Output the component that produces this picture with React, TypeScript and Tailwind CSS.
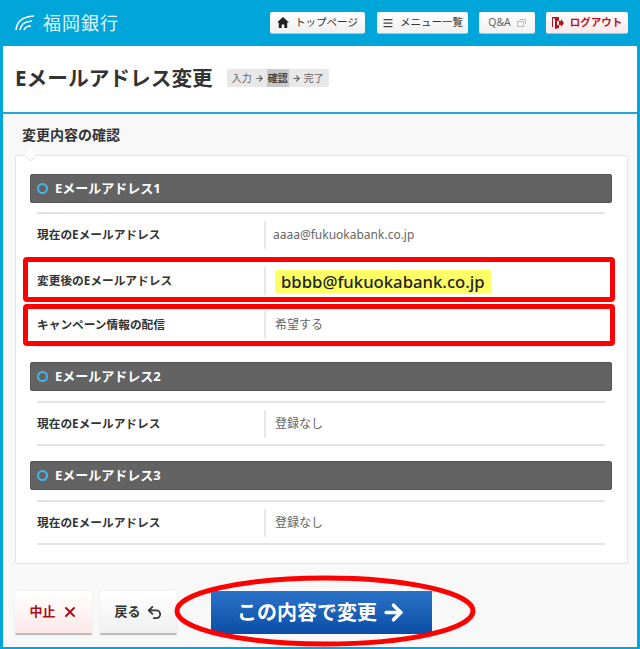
import { ArrowRight, Menu, Undo2, X } from "lucide-react";

const font = { fontFamily: '"Noto Sans", "Noto Sans CJK JP", sans-serif' };

function SectionHeader({ title }: { title: string }) {
  return (
    <div className="flex h-[29px] items-center gap-[7px] rounded-[2px] border border-[#555] bg-[#636363] pl-[6px] text-[13px] font-bold text-white">
      <span className="h-[11px] w-[11px] rounded-full border-2 border-[#45b4e6]" />
      {title}
    </div>
  );
}

function Row({ label, value }: { label: string; value: string }) {
  return (
    <div className="flex h-[43px] items-center border-b-2 border-[#e4e4e4]">
      <div className="w-[227px] text-[11.7px] font-bold text-[#333]">{label}</div>
      <div className="flex h-[28px] items-center border-l-2 border-[#e8e8e8] pl-[9px] text-[12px] text-[#666]">
        {value}
      </div>
    </div>
  );
}

function HeaderButton({ children, className }: { children: React.ReactNode; className: string }) {
  return (
    <div className={`flex h-[22px] items-center justify-center gap-[6px] rounded-[2px] border-b border-[#bbb] text-[10.5px] ${className}`}>
      {children}
    </div>
  );
}

export default function App() {
  return (
    <div className="relative h-[649px] w-[640px] overflow-hidden bg-[#00a5d9] px-[3px] pb-[3px]" style={font}>
      {/* Header */}
      <div className="flex h-[46px] items-center">
        <div className="ml-[12px] flex items-center gap-[8px] text-[18px] leading-none tracking-[1px] text-[#e3f5fc]">
          <svg width="20" height="16" viewBox="0 0 20 16" fill="none" stroke="#fff" strokeWidth="1.6">
            <path d="M1 15C2 7 6 2 19 1" />
            <path d="M5 15C6 10 8 7 17 6" />
            <path d="M9 15C10 12 12 11 16 11" />
          </svg>
          福岡銀行
        </div>
        <div className="ml-[151px] flex items-center">
          <HeaderButton className="w-[95px] bg-gradient-to-b from-white to-[#f0f0f0] text-[#333]">
            <svg width="12" height="11" viewBox="0 0 12 11" fill="#222">
              <path d="M6 0L12 5.5H10.2V11H7.3V7.5H4.7V11H1.8V5.5H0Z" />
            </svg>
            トップページ
          </HeaderButton>
          <HeaderButton className="ml-[12px] w-[91px] bg-gradient-to-b from-white to-[#f0f0f0] text-[#333]">
            <Menu size={12} stroke="#444" strokeWidth={2.5} />
            メニュー一覧
          </HeaderButton>
          <HeaderButton className="ml-[11px] w-[56px] bg-gradient-to-b from-white to-[#f0f0f0] text-[#666]">
            Q&amp;A
            <svg width="9" height="8" viewBox="0 0 9 8" fill="none" stroke="#bbb">
              <rect x="0.5" y="2.5" width="6" height="5" />
              <path d="M2.5 0.5H8.5V5" />
            </svg>
          </HeaderButton>
          <HeaderButton className="ml-[11px] w-[82px] gap-[4px] bg-gradient-to-b from-white to-[#fde8e8] font-bold text-[#b5121b]">
            <svg width="12" height="12" viewBox="0 0 12 12" fill="#b5121b">
              <path d="M0 0H7V4H5V8H7V11L3 12V2L1 1V10H0Z" />
              <path d="M7 4H9V2L12 6L9 10V8H7Z" />
            </svg>
            ログアウト
          </HeaderButton>
        </div>
      </div>

      {/* Title */}
      <div className="flex h-[68px] items-center gap-[14px] border-b-2 border-[#22a5d8] bg-white pb-[2px] pl-[12px]">
        <h1 className="text-[20.7px] font-bold leading-none text-[#333]">Eメールアドレス変更</h1>
        <div className="flex h-[18px] items-center rounded-[2px] bg-[#e8e8e8] pl-[5px] text-[10px] text-[#666]">
          入力
          <ArrowRight size={9} className="mx-[3px]" strokeWidth={3} />
          <span className="flex h-[18px] items-center bg-[#c8c8c8] px-[1px] font-bold text-[#444]">確認</span>
          <ArrowRight size={9} className="mx-[3px]" strokeWidth={3} />
          <span className="pr-[5px]">完了</span>
        </div>
      </div>

      {/* Content */}
      <div className="h-[533px] bg-[#f8f8f8] pl-[12px] pr-[9px]">
        <h2 className="pl-[7px] pt-[11px] text-[14px] font-bold leading-[20px] text-[#333]">変更内容の確認</h2>
        <div className="relative mt-[10px] h-[409px] rounded-[2px] border border-[#e2e2e2] bg-white pl-[14px] pr-[15px] pt-[18px]">
          <div className="absolute -top-[5px] left-[10px] h-[9px] w-[9px] rotate-45 border-b border-r border-[#e2e2e2] bg-white" />
          <SectionHeader title="Eメールアドレス1" />
          <div className="ml-[7px] mr-[7px] mt-[9px] border-t-2 border-[#e4e4e4]">
            <div className="flex h-[42px] items-center">
              <div className="w-[227px] text-[11.7px] font-bold text-[#333]">現在のEメールアドレス</div>
              <div className="flex h-[28px] items-center border-l-2 border-[#e8e8e8] pl-[7px] text-[12px] text-[#666]">aaaa@fukuokabank.co.jp</div>
            </div>
            <div className="mt-[4px] flex h-[42px] items-center">
              <div className="w-[227px] text-[11.7px] font-bold text-[#333]">変更後のEメールアドレス</div>
              <div className="flex h-[28px] items-center border-l-2 border-[#e8e8e8] pl-[9px]">
                <span className="bg-[#ffff66] px-[6px] py-[1px] text-[16.7px] font-medium leading-[21px] text-[#222]">bbbb@fukuokabank.co.jp</span>
              </div>
            </div>
            <div className="flex h-[45px] items-center border-b-2 border-[#e4e4e4] pt-[2px]">
              <div className="w-[227px] text-[11.7px] font-bold text-[#333]">キャンペーン情報の配信</div>
              <div className="flex h-[28px] items-center border-l-2 border-[#e8e8e8] pl-[9px] text-[12px] text-[#666]">希望する</div>
            </div>
          </div>

          <div className="mt-[15px]">
            <SectionHeader title="Eメールアドレス2" />
          </div>
          <div className="ml-[7px] mr-[7px] mt-[10px] border-t-2 border-[#e4e4e4]">
            <Row label="現在のEメールアドレス" value="登録なし" />
          </div>

          <div className="mt-[15px]">
            <SectionHeader title="Eメールアドレス3" />
          </div>
          <div className="ml-[7px] mr-[7px] mt-[10px] border-t-2 border-[#e4e4e4]">
            <Row label="現在のEメールアドレス" value="登録なし" />
          </div>
        </div>

        {/* Buttons */}
        <div className="mt-[27px] flex items-stretch">
          <div className="flex h-[44px] w-[77px] items-center justify-center gap-[6px] rounded-[2px] border-b-2 border-[#bbb] bg-gradient-to-b from-white to-[#fde8e8] text-[13px] font-bold text-[#a80f17] shadow-[0_0_1px_#bbb]">
            中止
            <X size={16} strokeWidth={3} />
          </div>
          <div className="ml-[8px] flex h-[44px] w-[77px] items-center justify-center gap-[5px] rounded-[2px] border-b-2 border-[#bbb] bg-gradient-to-b from-white to-[#f0f0f0] text-[13px] font-bold text-[#333] shadow-[0_0_1px_#bbb]">
            戻る
            <Undo2 size={17} strokeWidth={2.5} />
          </div>
          <div className="ml-[34px] flex h-[43px] w-[221px] items-center justify-center gap-[4px] bg-gradient-to-b from-[#2a73c8] to-[#0a4da6] text-[20px] font-bold text-white">
            この内容で変更
            <ArrowRight size={25} strokeWidth={3.5} />
          </div>
        </div>
      </div>

      {/* Red annotations */}
      <div className="absolute left-[23px] top-[257px] h-[45px] w-[592px] rounded-[4px] border-[5px] border-[#ff0000]" />
      <div className="absolute left-[23px] top-[304px] h-[42px] w-[592px] rounded-[4px] border-[5px] border-[#ff0000]" />
      <svg className="absolute left-[170px] top-[570px]" width="310" height="79" viewBox="0 0 310 79" fill="none">
        <ellipse cx="155" cy="41" rx="148" ry="33" stroke="#ff0000" strokeWidth="5" />
      </svg>
    </div>
  );
}
